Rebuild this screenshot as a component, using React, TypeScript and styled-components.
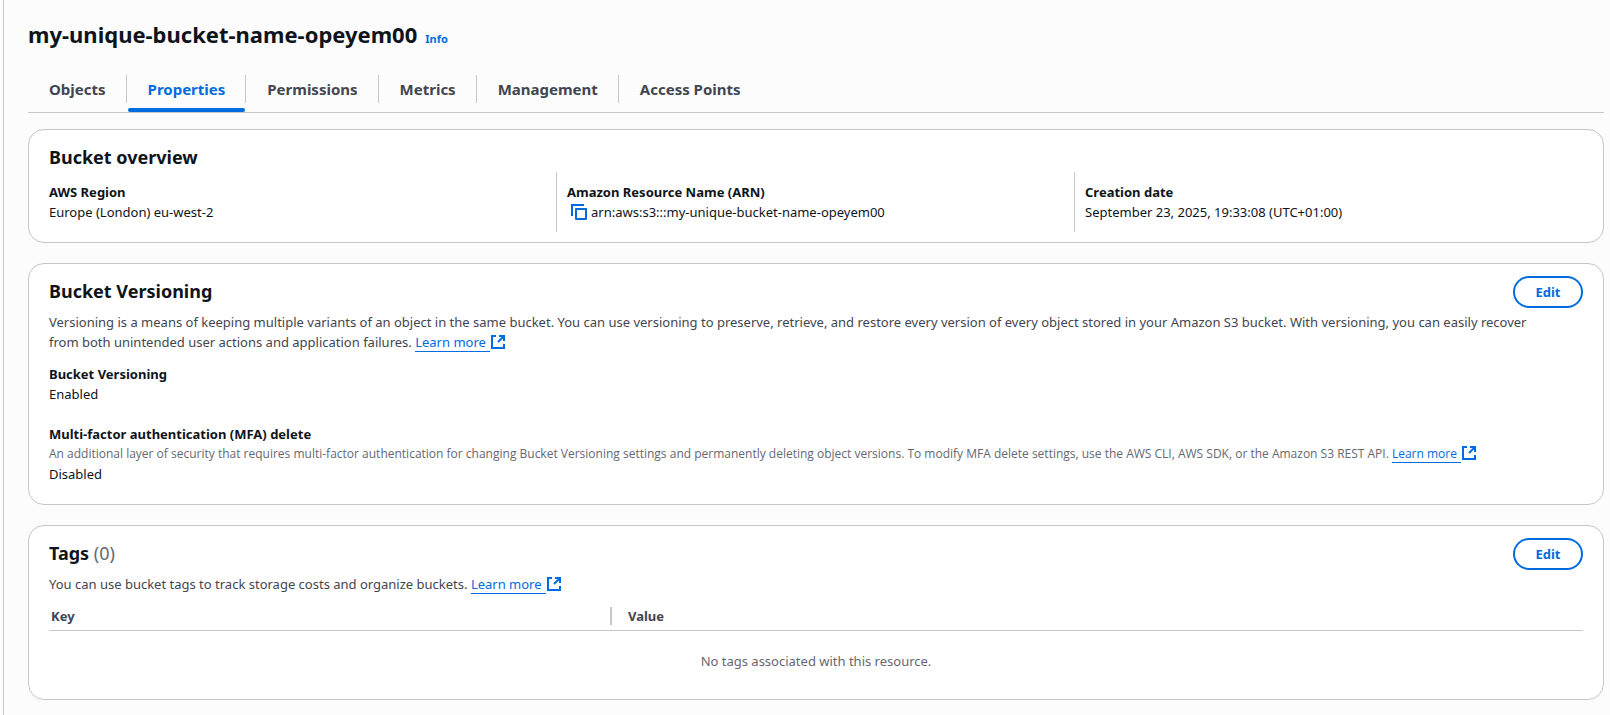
import React from "react";
import styled, { createGlobalStyle, css } from "styled-components";

const color = {
  page: "#fcfcfd",
  surface: "#ffffff",
  line: "#c6c6cd",
  heading: "#0f141a",
  text: "#0f141a",
  secondary: "#424650",
  muted: "#656871",
  blue: "#006ce0",
};

const GlobalStyle = createGlobalStyle`
  *, *::before, *::after { box-sizing: border-box; }
  body {
    margin: 0;
    background: ${color.page};
    color: ${color.text};
    font-family: "Noto Sans", "Open Sans", sans-serif;
    font-size: 13px;
    line-height: 20px;
  }
  h1, h2, p, dl, dt, dd, ul { margin: 0; padding: 0; }
  button { font-family: inherit; cursor: pointer; }
`;

const Page = styled.main`
  min-height: 100vh;
  margin-left: 3px;
  padding: 19px 6px 15px 24px;
  border-left: 1px solid ${color.line};
`;

const PageHeader = styled.header`
  display: flex;
  align-items: baseline;
  gap: 8px;
  margin-bottom: 26px;
`;

const PageTitle = styled.h1`
  color: ${color.heading};
  font-size: 22px;
  font-weight: 700;
  line-height: 30px;
`;

const InfoLink = styled.a`
  color: ${color.blue};
  font-size: 11px;
  font-weight: 700;
  text-decoration: none;
`;

const TabList = styled.div`
  display: flex;
  border-bottom: 1px solid ${color.line};
  margin-bottom: 16px;
`;

const TabItem = styled.div`
  display: flex;
  margin-left: 1px;

  &:not(:last-child)::after {
    content: "";
    width: 1px;
    height: 28px;
    background: ${color.line};
  }
`;

const Tab = styled.button<{ $active: boolean }>`
  position: relative;
  padding: 0 20px 9px;
  border: 0;
  background: none;
  color: ${({ $active }) => ($active ? color.blue : color.secondary)};
  font-size: 15px;
  font-weight: 700;
  line-height: 28px;

  ${({ $active }) =>
    $active &&
    css`
      &::after {
        content: "";
        position: absolute;
        left: 0;
        right: 0;
        bottom: 0;
        height: 4px;
        border-radius: 2px;
        background: ${color.blue};
      }
    `}
`;

const CardStack = styled.div`
  display: flex;
  flex-direction: column;
  gap: 20px;
`;

const Card = styled.section<{ $bottom: number }>`
  padding: 12px 20px ${({ $bottom }) => $bottom}px;
  border: 1px solid ${color.line};
  border-radius: 16px;
  background: ${color.surface};
`;

const CardHeader = styled.div`
  display: flex;
  justify-content: space-between;
  align-items: flex-start;
`;

const CardTitle = styled.h2`
  color: ${color.heading};
  font-size: 18px;
  font-weight: 700;
  line-height: 30px;
`;

const Counter = styled.span`
  color: ${color.muted};
  font-weight: 400;
`;

const EditButton = styled.button`
  min-width: 70px;
  height: 32px;
  padding: 0 20px;
  border: 2px solid ${color.blue};
  border-radius: 20px;
  background: ${color.surface};
  color: ${color.blue};
  font-size: 13px;
  font-weight: 700;
  line-height: 20px;
`;

const Description = styled.p`
  margin-top: 4px;
  color: ${color.secondary};
`;

const Columns = styled.dl`
  display: grid;
  grid-template-columns: repeat(3, minmax(0, 1fr));
  column-gap: 9px;
  margin-left: -11px;
`;

const Column = styled.div`
  padding: 10px 0 10px 10px;
  border-left: 1px solid ${color.line};

  &:first-child {
    border-left-color: transparent;
  }
`;

const Fields = styled.dl`
  display: flex;
  flex-direction: column;
  gap: 20px;
  margin-top: 12px;
`;

const Field = styled.div``;

const Label = styled.dt`
  font-weight: 700;
`;

const Value = styled.dd``;

const Hint = styled.dd`
  color: ${color.muted};
  font-family: "Open Sans", "Noto Sans", sans-serif;
  font-size: 12px;
`;

const CopyValue = styled.span`
  display: flex;
  align-items: center;
  gap: 4px;
  padding-left: 4px;
`;

const CopyButton = styled.button`
  display: flex;
  padding: 0;
  border: 0;
  background: none;
  color: ${color.blue};
`;

const ExternalAnchor = styled.a`
  color: ${color.blue};
  text-decoration: none;
  white-space: nowrap;

  svg {
    margin-left: 1px;
    vertical-align: -2px;
  }
`;

const LinkText = styled.span`
  padding-right: 4px;
  border-bottom: 1px solid ${color.blue};
`;

const TagTable = styled.table`
  width: 100%;
  border-collapse: collapse;
  table-layout: fixed;
`;

const HeadCell = styled.th<{ $width?: string }>`
  width: ${({ $width }) => $width ?? "auto"};
  padding: 13px 0 5px;
  border-bottom: 1px solid ${color.line};
  color: ${color.secondary};
  font-weight: 700;
  line-height: 18px;
  text-align: left;
`;

const HeadLabel = styled.div<{ $divider?: boolean; $indent: number }>`
  padding-left: ${({ $indent }) => $indent}px;
  border-right: ${({ $divider }) => ($divider ? `2px solid ${color.line}` : "0")};
`;

const EmptyCell = styled.td`
  padding: 20px 0 28px;
  color: ${color.muted};
  text-align: center;
`;

const CopyIcon = () => (
  <svg width="16" height="16" viewBox="0 0 16 16" fill="none" stroke="currentColor" strokeWidth="2" aria-hidden="true">
    <path d="M1 12V1h12" />
    <path d="M5 5h10v10H5z" strokeLinejoin="round" />
  </svg>
);

const ExternalIcon = () => (
  <svg width="14" height="14" viewBox="1 1 14 14" fill="none" stroke="currentColor" strokeWidth="2" aria-hidden="true">
    <path d="M9 2h5v5" shapeRendering="crispEdges" />
    <path d="m8 8 6-6" />
    <path d="M14 10v4H2V2h4" shapeRendering="crispEdges" />
  </svg>
);

const LearnMore = () => (
  <ExternalAnchor href="#learn-more">
    <LinkText>Learn more</LinkText>
    <ExternalIcon />
  </ExternalAnchor>
);

const tabs = ["Objects", "Properties", "Permissions", "Metrics", "Management", "Access Points"];

export default function App() {
  const [active, setActive] = React.useState("Properties");

  return (
    <>
      <GlobalStyle />
      <Page>
        <PageHeader>
          <PageTitle>my-unique-bucket-name-opeyem00</PageTitle>
          <InfoLink href="#info">Info</InfoLink>
        </PageHeader>

        <TabList role="tablist">
          {tabs.map((name) => (
            <TabItem key={name} role="presentation">
              <Tab
                type="button"
                role="tab"
                aria-selected={name === active}
                $active={name === active}
                onClick={() => setActive(name)}
              >
                {name}
              </Tab>
            </TabItem>
          ))}
        </TabList>

        <CardStack>
          <Card $bottom={10}>
            <CardTitle>Bucket overview</CardTitle>
            <Columns>
              <Column>
                <Label>AWS Region</Label>
                <Value>Europe (London) eu-west-2</Value>
              </Column>
              <Column>
                <Label>Amazon Resource Name (ARN)</Label>
                <Value>
                  <CopyValue>
                    <CopyButton type="button" aria-label="Copy ARN">
                      <CopyIcon />
                    </CopyButton>
                    arn:aws:s3:::my-unique-bucket-name-opeyem00
                  </CopyValue>
                </Value>
              </Column>
              <Column>
                <Label>Creation date</Label>
                <Value>September 23, 2025, 19:33:08 (UTC+01:00)</Value>
              </Column>
            </Columns>
          </Card>

          <Card $bottom={20}>
            <CardHeader>
              <CardTitle>Bucket Versioning</CardTitle>
              <EditButton type="button">Edit</EditButton>
            </CardHeader>
            <Description>
              Versioning is a means of keeping multiple variants of an object in the same bucket. You can use
              versioning to preserve, retrieve, and restore every version of every object stored in your Amazon S3
              bucket. With versioning, you can easily recover
              <br />
              from both unintended user actions and application failures. <LearnMore />
            </Description>
            <Fields>
              <Field>
                <Label>Bucket Versioning</Label>
                <Value>Enabled</Value>
              </Field>
              <Field>
                <Label>Multi-factor authentication (MFA) delete</Label>
                <Hint>
                  An additional layer of security that requires multi-factor authentication for changing Bucket
                  Versioning settings and permanently deleting object versions. To modify MFA delete settings, use the
                  AWS CLI, AWS SDK, or the Amazon S3 REST API. <LearnMore />
                </Hint>
                <Value>Disabled</Value>
              </Field>
            </Fields>
          </Card>

          <Card $bottom={0}>
            <CardHeader>
              <CardTitle>
                Tags <Counter>(0)</Counter>
              </CardTitle>
              <EditButton type="button">Edit</EditButton>
            </CardHeader>
            <Description>
              You can use bucket tags to track storage costs and organize buckets. <LearnMore />
            </Description>
            <TagTable>
              <thead>
                <tr>
                  <HeadCell scope="col" $width="36.7%">
                    <HeadLabel $divider $indent={2}>Key</HeadLabel>
                  </HeadCell>
                  <HeadCell scope="col">
                    <HeadLabel $indent={16}>Value</HeadLabel>
                  </HeadCell>
                </tr>
              </thead>
              <tbody>
                <tr>
                  <EmptyCell colSpan={2}>No tags associated with this resource.</EmptyCell>
                </tr>
              </tbody>
            </TagTable>
          </Card>
        </CardStack>
      </Page>
    </>
  );
}
